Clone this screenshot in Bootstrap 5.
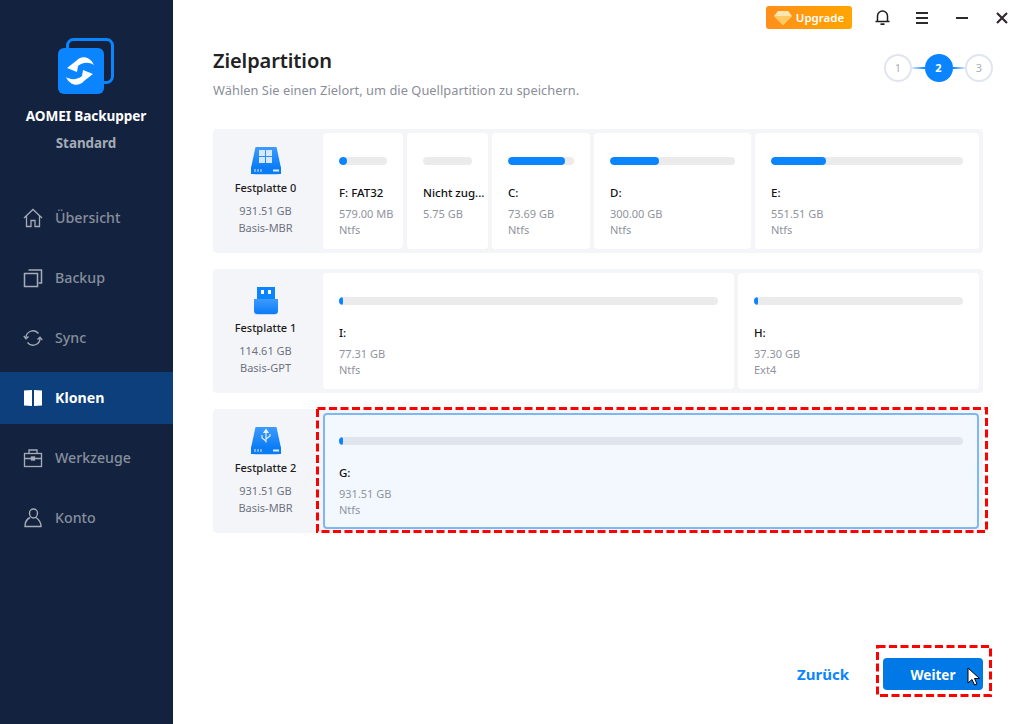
<!DOCTYPE html>
<html lang="de"><head><meta charset="utf-8"><title>AOMEI Backupper</title>
<link rel="stylesheet" href="https://cdn.jsdelivr.net/npm/bootstrap@5.3.0/dist/css/bootstrap.min.css">
<style>
html,body{width:1023px;height:724px;overflow:hidden;margin:0;background:#fff;font-family:"Noto Sans",sans-serif}
.shell{width:1023px;height:724px;position:relative}
.side{width:173px;background:#13233f;flex:none}
.logo{margin:38px 0 0 56px;height:56px}
.prod{font-size:13.6px;font-weight:700;color:#fff;line-height:18px;margin-top:13px;letter-spacing:-.1px;padding-right:1px}
.edit{font-size:13.4px;font-weight:700;color:#a5abb6;line-height:18px;margin-top:9px;padding-right:1px}
.navlist{margin-top:40px;gap:8px}
.navrow{height:52px;padding-left:23px;gap:12px;color:#878e9c;font-size:14.2px;font-weight:500}
.navrow svg{width:20px;height:20px;flex:none}
.navrow.on{background:#0c3f7c;color:#fff;font-weight:700}
.mainp{min-width:0}
.topbar{height:35px;padding-top:6px}
.upg{width:86px;height:23px;border-radius:3px;background:linear-gradient(90deg,#ff8f1a,#ffa500);color:#fff;font-size:11.5px;font-weight:600;gap:4px;margin-left:593px}
.tico{width:40px;height:23px}
.tico.first{margin-left:10px}
.head{padding:0 30px 0 40px;height:54px}
.ttl{font-size:20px;font-weight:600;line-height:28px;color:#222;margin:12px 0 0;letter-spacing:-.1px}
.sub{font-size:12.8px;line-height:18px;color:#8a8e99;margin-top:6px;letter-spacing:.05px}
.stp{width:28px;height:28px;border-radius:50%;border:2px solid #e1e5ee;color:#a9aeb9;font-size:11px;background:#fff}
.stp.cur{background:#0a84ff;border-color:#0a84ff;color:#fff;font-weight:700}
.lnk{width:12.5px;height:2px;background:linear-gradient(90deg,#dbe9fb,#0a84ff)}
.lnk.back{background:linear-gradient(90deg,#0a84ff,#dbe9fb)}
.steps{margin-top:19px}
.disks{margin:40px 0 0 40px;width:770px;gap:16px}
.dsk{height:124px;background:#f4f5f8;border-radius:4px;padding:4px}
.dinfo{width:106px;flex:none;text-align:center;font-size:11px;line-height:16px;color:#6d7280;padding:14px 9px 0 0}
.dinfo svg{display:block;margin:0 auto 5px;width:32px;height:28px}
.dname{color:#1c1c1c;font-weight:500;margin-bottom:7px;line-height:16px}
.dtype{display:block;margin-top:1px}
.pcards{gap:4px;flex:1;min-width:0}
.pc{background:#fff;border-radius:4px;padding:24px 16px 0;flex:none;font-size:11px;line-height:16px;color:#8f939e;overflow:hidden;white-space:nowrap}
.pc.sel{background:#f3f8fe;border:2px solid #7db8f5;padding:22px 14px 0;width:656px}
.trk{height:8px;background:#ebebeb;border-radius:4px;overflow:hidden}
.sel .trk{background:#e0e4ec}
.fil{height:8px;background:#0a84ff;border-radius:4px}
.pname{color:#111;font-weight:500;margin-top:20px;margin-bottom:5px;white-space:nowrap;line-height:16px;font-size:11.5px}
.foot{margin-top:125px;padding-right:40px;gap:34px}
.back-l{font-size:15px;font-weight:700;color:#0a84ff;text-decoration:none;padding-top:1px}
.go{width:100px;height:32px;background:#0078e6;border:0;border-radius:4px;color:#fff;font-size:13.5px;font-weight:700;padding:2px 0 0}
.dash{position:absolute;pointer-events:none}
.dash rect{fill:none;stroke:#f00;stroke-width:3;stroke-dasharray:8 3.500}
.d1{left:316px;top:407px}
.d2{left:876px;top:645px}
.cur-i{position:absolute;left:967px;top:667px;width:13px;height:19px}
</style></head>
<body>
<svg width="0" height="0" class="position-absolute"><defs>
<linearGradient id="dg" x1="0" y1="0" x2="0" y2="1"><stop offset="0" stop-color="#3d9bff"/><stop offset="1" stop-color="#0a7cf5"/></linearGradient>
<filter id="ds" x="-20%" y="-20%" width="140%" height="140%"><feGaussianBlur stdDeviation="1"/></filter>
</defs></svg>
<div class="shell d-flex">
<aside class="side d-flex flex-column">
 <div class="logo d-flex">
  <svg width="60" height="58" viewBox="0 0 60 58"><rect x="11.500" y="1.500" width="45" height="43" rx="6" fill="none" stroke="#0a84ff" stroke-width="3"/><rect x="2" y="10" width="46" height="46" rx="6" fill="#0a84ff"/>
  <path d="M11 30 20 23C25 17 34 18 38 27 33 24 27 24 22 28L21 34z" fill="#fff"/>
  <path d="M37 36 28 43C23 49 14 48 10 39 15 42 21 42 26 38L27 32z" fill="#fff"/></svg>
 </div>
 <div class="prod text-center">AOMEI Backupper</div>
 <div class="edit text-center">Standard</div>
 <nav class="navlist d-flex flex-column">
  <div class="navrow d-flex align-items-center"><svg viewBox="0 0 20 20" fill="none" stroke="#a5abb8" stroke-width="1.300"><path d="M1 10 10 1.500 19 10M3.500 8v10.500h4.500v-6h4v6h4.500V8"/></svg><span>Übersicht</span></div>
  <div class="navrow d-flex align-items-center"><svg viewBox="0 0 20 20" fill="none" stroke="#a5abb8" stroke-width="1.500"><rect x="1.500" y="5.500" width="13" height="13"/><path d="M5.500 2h13v13h-3"/></svg><span>Backup</span></div>
  <div class="navrow d-flex align-items-center"><svg viewBox="0 0 20 20" fill="none" stroke="#a5abb8" stroke-width="1.300"><path d="M3 10a7 7 0 0 1 12.500-4.500M17 10a7 7 0 0 1-12.500 4.500"/><path d="M.800 8 3 10.800 5.500 8.500M19.200 12 17 9.200 14.500 11.500"/></svg><span>Sync</span></div>
  <div class="navrow on d-flex align-items-center"><svg viewBox="0 0 20 20" fill="#fff"><path d="M1 2.500 9 2v16l-8-.5zM11 2l8 .5v15l-8 .5z"/></svg><span>Klonen</span></div>
  <div class="navrow d-flex align-items-center"><svg viewBox="0 0 20 20" fill="none" stroke="#a5abb8" stroke-width="1.300"><rect x="1.500" y="5.500" width="17" height="13"/><path d="M6 5.500V2h8v3.500M1.500 10.500h17"/><rect x="8.500" y="9" width="3" height="3" fill="#a5abb8"/></svg><span>Werkzeuge</span></div>
  <div class="navrow d-flex align-items-center"><svg viewBox="0 0 20 20" fill="none" stroke="#a5abb8" stroke-width="1.400"><path d="M6.500 5a4 4 0 0 1 8 0 c0 3-2 5-4 5s-4-2-4-5zM7 9.500C4 11 2 14 2 18.500h16c0-4.500-2-7-5-9"/></svg><span>Konto</span></div>
 </nav>
</aside>
<main class="mainp flex-grow-1 d-flex flex-column">
 <div class="topbar d-flex align-items-start">
  <div class="upg d-flex align-items-center justify-content-center"><svg width="18" height="14" viewBox="0 0 18 14"><path d="M4 0h10l4 5-9 9-9-9z" fill="#ffe6b0"/><path d="M0 5h18l-9 9z" fill="#ffca62"/></svg><span>Upgrade</span></div>
  <div class="tico first d-flex align-items-center justify-content-center"><svg width="15" height="15" viewBox="0 0 15 15" fill="none" stroke="#1e1e1e" stroke-width="1.500"><path d="M.500 11.500h14M2.500 11.500V6a5 5 0 0 1 10 0v5.500"/><path d="M5.500 14.200h4" stroke-width="1.800"/></svg></div>
  <div class="tico d-flex align-items-center justify-content-center"><svg width="12" height="12" viewBox="0 0 12 12" stroke="#2b2b2b" stroke-width="2"><path d="M0 1h12M0 6h12M0 11h12"/></svg></div>
  <div class="tico d-flex align-items-center justify-content-center"><svg width="12" height="12" viewBox="0 0 12 12" stroke="#2b2b2b" stroke-width="2"><path d="M0 6h12"/></svg></div>
  <div class="tico d-flex align-items-center justify-content-center"><svg width="12" height="12" viewBox="0 0 12 12" stroke="#33282f" stroke-width="2.200"><path d="M1 1l10 10M11 1 1 11"/></svg></div>
 </div>
 <div class="head d-flex justify-content-between">
  <div><h1 class="ttl">Zielpartition</h1><div class="sub">Wählen Sie einen Zielort, um die Quellpartition zu speichern.</div></div>
  <div class="steps d-flex align-items-center align-self-start">
   <div class="stp d-flex align-items-center justify-content-center">1</div><div class="lnk"></div>
   <div class="stp cur d-flex align-items-center justify-content-center">2</div><div class="lnk back"></div>
   <div class="stp d-flex align-items-center justify-content-center">3</div>
  </div>
 </div>
 <div class="disks d-flex flex-column">
  <section class="dsk d-flex">
   <div class="dinfo"><svg viewBox="0 0 32 28"><rect x="4" y="25" width="24" height="3" fill="#9cc8f7" filter="url(#ds)"/><path d="M5.500 0h21L31 21H1z" fill="url(#dg)"/><rect x="1" y="20" width="30" height="7" rx=".5" fill="#0a7cf5"/><path d="M9 3h6v6H9zM16 3h6v6h-6zM9 10h6v6H9zM16 10h6v6h-6z" fill="#d5e8ff"/><rect x="23" y="22.500" width="6" height="2" fill="#dcecff"/><path d="M4 23.500h8" stroke="#6fb2fb" stroke-width="3" stroke-dasharray="2 1"/></svg><div class="dname">Festplatte 0</div>931.51 GB<span class="dtype">Basis-MBR</span></div>
   <div class="pcards d-flex">
    <div class="pc" style="width:80px"><div class="trk"><div class="fil" style="width:8px"></div></div><div class="pname">F: FAT32</div>579.00 MB<br>Ntfs</div>
    <div class="pc" style="width:81px"><div class="trk"></div><div class="pname">Nicht zug...</div>5.75 GB</div>
    <div class="pc" style="width:98px"><div class="trk"><div class="fil" style="width:57px"></div></div><div class="pname">C:</div>73.69 GB<br>Ntfs</div>
    <div class="pc" style="width:157px"><div class="trk"><div class="fil" style="width:49px"></div></div><div class="pname">D:</div>300.00 GB<br>Ntfs</div>
    <div class="pc" style="width:224px"><div class="trk"><div class="fil" style="width:55px"></div></div><div class="pname">E:</div>551.51 GB<br>Ntfs</div>
   </div>
  </section>
  <section class="dsk d-flex">
   <div class="dinfo"><svg viewBox="0 0 32 28"><rect x="6" y="26" width="20" height="2" fill="#9cc8f7" filter="url(#ds)"/><path d="M7 0h18v12H7z" fill="#0a84ff"/><rect x="11" y="3" width="3" height="4" fill="#fff"/><rect x="18" y="3" width="3" height="4" fill="#fff"/><path d="M4 12h24v12a3 3 0 0 1-3 3H7a3 3 0 0 1-3-3z" fill="url(#dg)"/></svg><div class="dname">Festplatte 1</div>114.61 GB<span class="dtype">Basis-GPT</span></div>
   <div class="pcards d-flex">
    <div class="pc" style="width:411px"><div class="trk"><div class="fil" style="width:4px"></div></div><div class="pname">I:</div>77.31 GB<br>Ntfs</div>
    <div class="pc" style="width:241px"><div class="trk"><div class="fil" style="width:4px"></div></div><div class="pname">H:</div>37.30 GB<br>Ext4</div>
   </div>
  </section>
  <section class="dsk d-flex">
   <div class="dinfo"><svg viewBox="0 0 32 28"><rect x="4" y="25" width="24" height="3" fill="#9cc8f7" filter="url(#ds)"/><path d="M5.500 0h21L31 21H1z" fill="url(#dg)"/><rect x="1" y="20" width="30" height="7" rx=".5" fill="#0a7cf5"/><path d="M16 2.500v13M16 2.500l-2 3h4zM16 14l-4-3V8M16 12l4-3V7" fill="none" stroke="#e2efff" stroke-width="1.200"/><rect x="23" y="22.500" width="6" height="2" fill="#dcecff"/><path d="M4 23.500h8" stroke="#6fb2fb" stroke-width="3" stroke-dasharray="2 1"/></svg><div class="dname">Festplatte 2</div>931.51 GB<span class="dtype">Basis-MBR</span></div>
   <div class="pcards d-flex">
    <div class="pc sel"><div class="trk"><div class="fil" style="width:4px"></div></div><div class="pname">G:</div>931.51 GB<br>Ntfs</div>
   </div>
  </section>
 </div>
 <div class="foot d-flex justify-content-end align-items-center">
  <a class="back-l" href="#">Zurück</a>
  <button class="go" type="button">Weiter</button>
 </div>
</main>
<svg class="dash d1" width="672" height="126"><rect x="1.500" y="1.500" width="669" height="123"/></svg>
<svg class="dash d2" width="116" height="52"><rect x="1.500" y="1.500" width="113" height="49"/></svg>
<svg class="cur-i" viewBox="0 0 13 19"><path d="M1 1v15l4-3.500 2.500 5.500 2.500-1-2.500-5.500H12.500z" fill="#fff" stroke="#000"/></svg>
</div>
</body></html>
